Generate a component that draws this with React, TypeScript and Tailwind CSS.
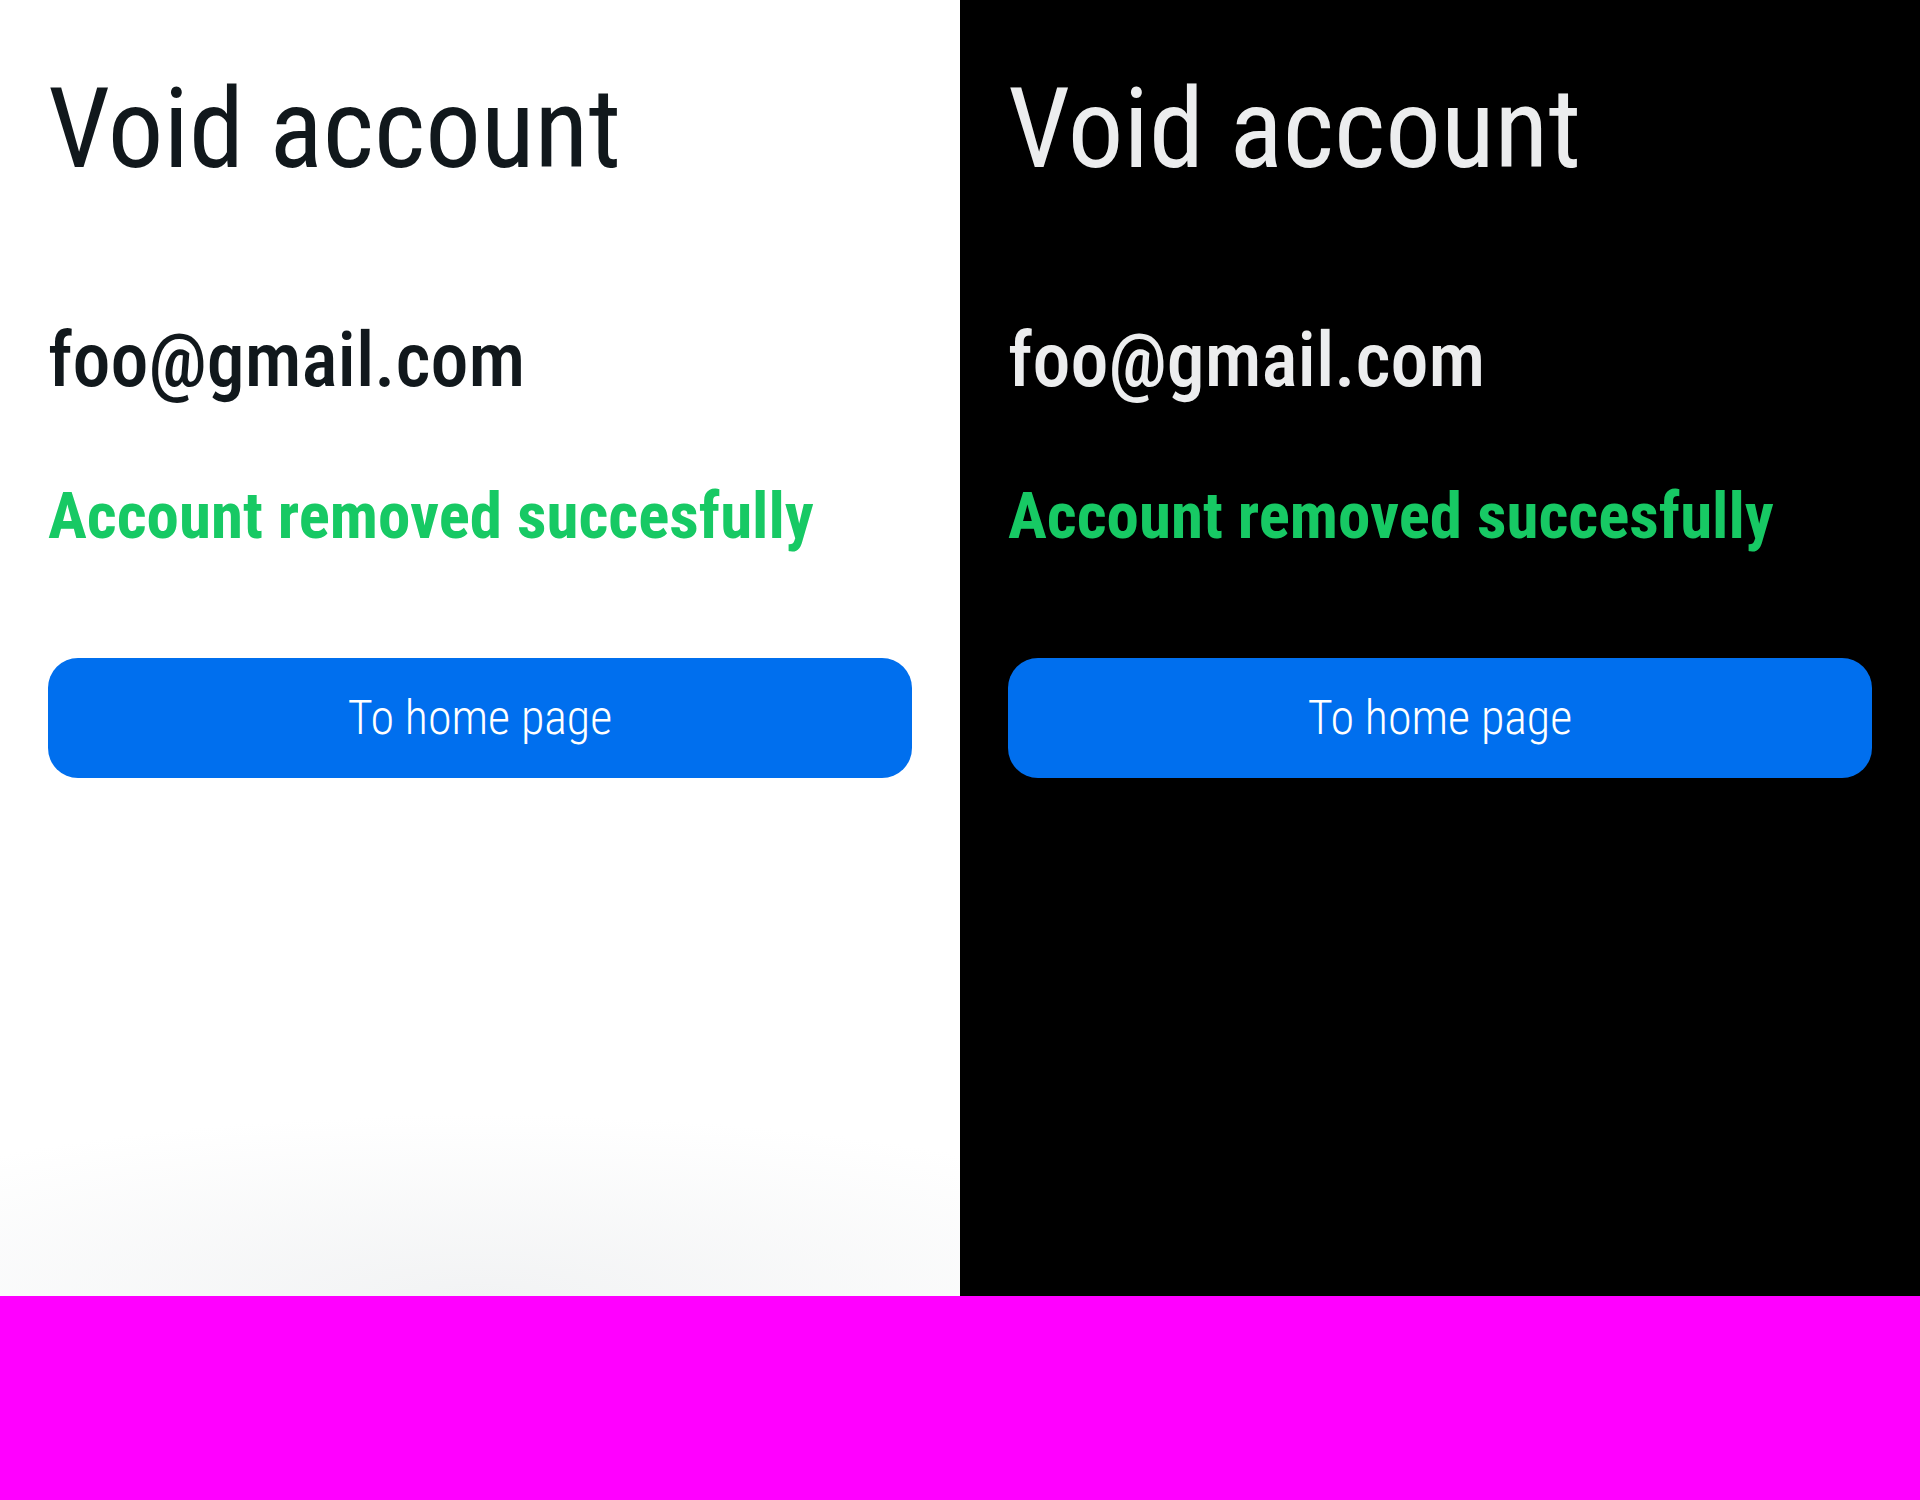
import React from 'react';

function Panel({ dark }: { dark?: boolean }) {
  return (
    <div
      className={
        dark
          ? "bg-black text-[#ecedee] px-12 pt-[74px] font-['Roboto_Condensed','Liberation_Sans',sans-serif]"
          : "bg-[radial-gradient(ellipse_80%_14%_at_50%_100%,#f2f3f4_0%,#ffffff_100%)] text-[#11181c] px-12 pt-[74px] font-['Roboto_Condensed','Liberation_Sans',sans-serif]"
      }
    >
      <h1 className="text-[111px] leading-none font-normal whitespace-nowrap">Void account</h1>
      <p className="mt-[137px] text-[76px] leading-none font-medium whitespace-nowrap">foo@gmail.com</p>
      <p className="mt-[86px] text-[65px] leading-none font-bold whitespace-nowrap text-[#17c964]">
        Account removed succesfully
      </p>
      <button className="mt-[109px] w-full h-[120px] rounded-[30px] bg-[#006fee] text-white text-[48px] font-light">
        To home page
      </button>
    </div>
  );
}

export default function App() {
  return (
    <div className="h-[1500px] bg-[#ff00ff]">
      <div className="grid grid-cols-2 h-[1296px]">
        <Panel />
        <Panel dark />
      </div>
    </div>
  );
}
